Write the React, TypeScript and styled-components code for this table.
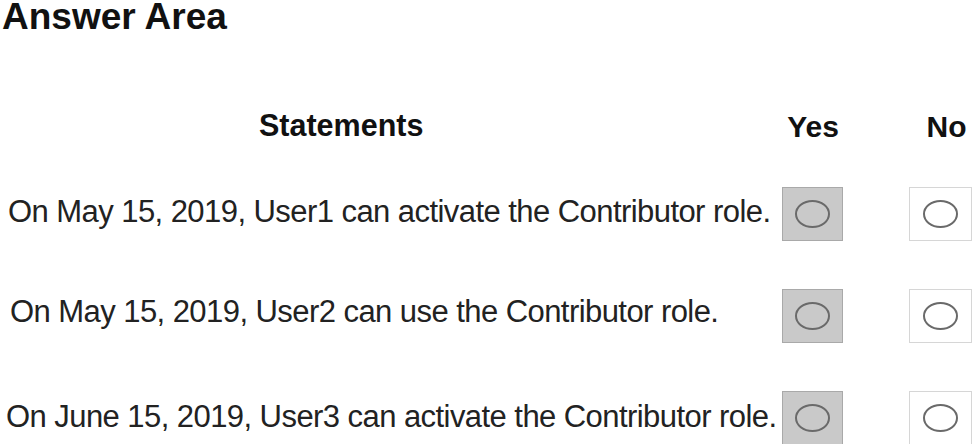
import React, { FC } from "react";
import styled, { createGlobalStyle } from "styled-components";

const GlobalStyle = createGlobalStyle`
  html, body {
    margin: 0;
    padding: 0;
    background: #ffffff;
    overflow: hidden;
  }
  body {
    font-family: "Liberation Sans", Arial, sans-serif;
    color: #1e1e1e;
  }
`;

const Page = styled.div`
  width: 973px;
  height: 444px;
  display: flex;
  flex-direction: column;
`;

const Title = styled.h1`
  margin: 0 0 0 2px;
  font-size: 37px;
  line-height: 34px;
  font-weight: bold;
  color: #111;
`;

const Table = styled.div`
  margin-top: 73px;
  display: flex;
  flex-direction: column;
`;

const HeaderRow = styled.div`
  display: grid;
  grid-template-columns: 782px 62px 1fr;
  height: 40px;
  align-items: center;
`;

const HeaderCell = styled.div<{ $indent?: number; $raise?: number }>`
  font-size: 30px;
  line-height: 40px;
  font-weight: bold;
  color: #111;
  padding-left: ${(p) => p.$indent ?? 0}px;
  margin-top: ${(p) => -(p.$raise ?? 0)}px;
  text-align: ${(p) => (p.$indent !== undefined ? "left" : "center")};
`;

const StatementsHeader = styled(HeaderCell)`
  font-size: 30.5px;
`;

const NoHeader = styled(HeaderCell)`
  justify-self: end;
  width: 63px;
  padding-left: 10px;
  box-sizing: border-box;
`;

const Body = styled.div`
  margin-top: 40px;
  display: grid;
  grid-template-columns: 782px 62px 1fr;
  grid-auto-rows: 54px;
  row-gap: 48px;
  align-items: center;
`;

const Statement = styled.div<{ $indent: number; $lift: number }>`
  font-size: 31px;
  letter-spacing: -0.56px;
  line-height: 54px;
  white-space: nowrap;
  color: #222;
  padding-left: ${(p) => p.$indent}px;
  padding-bottom: ${(p) => p.$lift * 2}px;
`;

const Choice = styled.div<{ $selected?: boolean }>`
  box-sizing: border-box;
  height: 54px;
  display: flex;
  align-items: center;
  justify-content: center;
  background: ${(p) => (p.$selected ? "#c9c9c9" : "#ffffff")};
  border: 1px solid ${(p) => (p.$selected ? "#a9a9a9" : "#d6d6d6")};
`;

const YesChoice = styled(Choice)`
  width: 61px;
`;

const NoChoice = styled(Choice)`
  width: 63px;
  justify-self: end;
  margin-right: 1px;
`;

const Radio = styled.span`
  box-sizing: border-box;
  width: 35px;
  height: 28px;
  border-radius: 50%;
  border: 2.5px solid #6a6a6a;
`;

const rows = [
  { text: "On May 15, 2019, User1 can activate the Contributor role.", indent: 8, lift: 2 },
  { text: "On May 15, 2019, User2 can use the Contributor role.", indent: 10, lift: 4 },
  { text: "On June 15, 2019, User3 can activate the Contributor role.", indent: 6, lift: 1 },
];

const App: FC = () => {
  return (
    <Page>
      <GlobalStyle />
      <Title>Answer Area</Title>
      <Table>
        <HeaderRow>
          <StatementsHeader $indent={259} $raise={5}>
            Statements
          </StatementsHeader>
          <HeaderCell>Yes</HeaderCell>
          <NoHeader>No</NoHeader>
        </HeaderRow>
        <Body>
          {rows.map((r) => (
            <React.Fragment key={r.text}>
              <Statement $indent={r.indent} $lift={r.lift}>
                {r.text}
              </Statement>
              <YesChoice $selected>
                <Radio />
              </YesChoice>
              <NoChoice>
                <Radio />
              </NoChoice>
            </React.Fragment>
          ))}
        </Body>
      </Table>
    </Page>
  );
};

export default App;
